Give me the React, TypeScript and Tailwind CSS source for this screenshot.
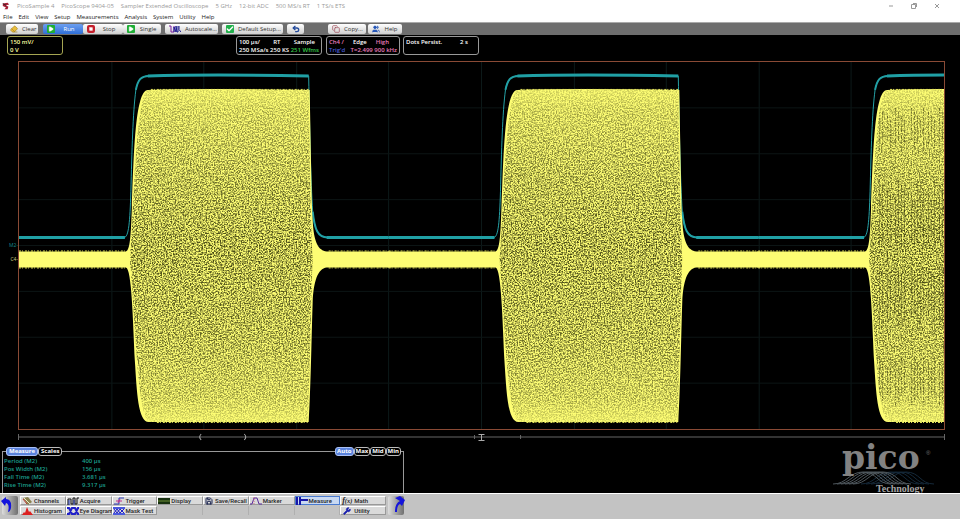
import React from 'react';
import { Check, Copy as CopyIcon, Eraser, Play, Save, Square, Undo2, Users, Wrench } from 'lucide-react';

const menuItems = ['File', 'Edit', 'View', 'Setup', 'Measurements', 'Analysis', 'System', 'Utility', 'Help'];

const titleParts = [
    'PicoSample 4',
    'PicoScope 9404-05',
    'Sampler Extended Oscilloscope',
    '5 GHz',
    '12-bit ADC',
    '500 MS/s RT',
    '1 TS/s ETS'
];

const measurements = [
    { label: 'Period (M2)', value: '400 µs' },
    { label: 'Pos Width (M2)', value: '156 µs' },
    { label: 'Fall Time (M2)', value: '3.681 µs' },
    { label: 'Rise Time (M2)', value: '9.317 µs' }
];

const PulseIcon: React.FC = () => (
    <svg viewBox="0 0 12 9" className="h-[9px] w-3 shrink-0" fill="none">
        <path d="M0 1h2v6h3V1" stroke="#7a1fa0" />
        <path d="M5 7V2l2 5V1l1 6h1V1M10 1Q9 5 12 7" stroke="#1c1c90" />
    </svg>
);

const ChannelsIcon: React.FC = () => (
    <svg viewBox="0 0 12 8" className="h-2 w-3 shrink-0">
        <path d="M2 1L7 0L11 5L7 8Z" fill="#8b8350" />
        <path d="M3 1L9 7" stroke="#f2eccb" />
        <path d="M2 2L6 7" stroke="#b7372b" />
    </svg>
);

const AcquireIcon: React.FC = () => (
    <svg viewBox="0 0 12 8" className="h-2 w-3 shrink-0" fill="none">
        <path d="M1 8V2h3v5h2V1h2v6h2V1h2" stroke="#111" />
        <path d="M2 8V3M7 8V3" stroke="#2437ae" />
    </svg>
);

const TriggerIcon: React.FC = () => (
    <svg viewBox="0 0 12 8" className="h-2 w-3 shrink-0" fill="none">
        <path d="M1 7h5V1h5" stroke="#2f3bb8" />
        <path d="M3 4h6M7 2L5 6" stroke="#c3318c" />
    </svg>
);

const DisplayIcon: React.FC = () => (
    <svg viewBox="0 0 12 8" className="h-2 w-3 shrink-0">
        <rect y="1" width="12" height="6" fill="#17300f" />
        <path d="M0 4h12" stroke="#6d8d37" />
    </svg>
);

const MarkerIcon: React.FC = () => (
    <svg viewBox="0 0 12 8" className="h-2 w-3 shrink-0" fill="none">
        <path d="M0 7h2l2-6h3l2 6h3" stroke="#5a2a9c" />
        <path d="M4 0v8" stroke="#cf6b84" strokeDasharray="1 1" />
    </svg>
);

const MeasureIcon: React.FC = () => (
    <svg viewBox="0 0 12 8" className="h-2 w-3 shrink-0">
        <path d="M1 0v8M4 0v8" stroke="#1717a8" strokeWidth="2" />
        <path d="M4 3h8" stroke="#1717a8" strokeWidth="2" />
    </svg>
);

const HistogramIcon: React.FC = () => (
    <svg viewBox="0 0 12 8" className="h-2 w-3 shrink-0">
        <path d="M1 8L3 5L4 6L6 0L8 5L9 4L12 8Z" fill="#dc2020" />
    </svg>
);

const EyeIcon: React.FC = () => (
    <svg viewBox="0 0 12 8" className="h-2 w-3 shrink-0" fill="none">
        <path d="M0 1h2l3 6h3l3-6h1M0 7h2l3-6h3l3 6h1" stroke="#2020c8" strokeWidth="2" />
    </svg>
);

const MaskIcon: React.FC = () => (
    <svg viewBox="0 0 12 8" className="h-2 w-3 shrink-0" fill="none">
        <path d="M0 1h12M0 7h12" stroke="#4b59dc" strokeWidth="2" />
        <path d="M1 2L4 6L7 2L11 6M1 6L4 2L7 6L11 2" stroke="#2020c8" />
    </svg>
);

const functionButtons = [
    { label: 'Channels', icon: <ChannelsIcon /> },
    { label: 'Acquire', icon: <AcquireIcon /> },
    { label: 'Trigger', icon: <TriggerIcon /> },
    { label: 'Display', icon: <DisplayIcon /> },
    { label: 'Save/Recall', icon: <Save className="h-2 w-[10px] shrink-0 text-[#1b2450]" strokeWidth={3} /> },
    { label: 'Marker', icon: <MarkerIcon /> },
    { label: 'Measure', icon: <MeasureIcon />, active: true },
    { label: 'Math', icon: <i className="w-3 shrink-0 font-['Liberation_Serif',serif] text-[8px] font-bold">f<small>(x)</small></i> },
    { label: 'Histogram', icon: <HistogramIcon /> },
    { label: 'Eye Diagram', icon: <EyeIcon /> },
    { label: 'Mask Test', icon: <MaskIcon /> },
    null,
    null,
    null,
    null,
    { label: 'Utility', icon: <Wrench className="h-2 w-3 shrink-0 fill-[#1c22b0] text-[#1c22b0]" /> }
];

// One modulation burst: upper edge left to right, then the lower edge back
const burst =
    'M-1 190H107C111 189 112 176 113 146C115 96 116 28 129 28Q180 26 291 28C292 80 293 135 294 158C295 182 300 189 308 190H372V206H308C299 207 295 220 294 240C293 270 292 330 290 361H130C119 361 118 330 116 300C114 260 113 207 107 206H-1Z';
const burstBody = 'M111 198C115 160 116 28 130 28H290C291 100 292 160 294 198C292 240 291 330 289 361H132C118 361 117 260 111 198Z';
const envelope = 'M0 176H105C110 176 111 160 112 130C113 90 114 50 117 28C119 18 122 14 130 14Q190 12 290 14C291 70 292 120 294 150C296 168 299 176 309 176H370';
const envelopeCrests = 'M0 176H106M129 14Q190 12 290 14M308 176H370';
const envelopeShoulders = 'M117 28C119 18 122 14 130 14M294 150C296 168 299 176 309 176';

// Sample aliasing shows up as thin columns in the last burst
const aliasColumns = [861, 864, 869, 872, 877, 880, 883, 886, 893, 896, 899, 902, 905, 910, 913, 916, 921, 924];

const Waveform: React.FC = () => {
    const periods = [0, 370, 740];

    return (
        <svg viewBox="0 0 926 368" preserveAspectRatio="none" className="block h-full w-full" role="img" aria-label="Waveform">
            <defs>
                <filter id="speckle" x="0" y="0" width="100%" height="100%" colorInterpolationFilters="sRGB">
                    <feTurbulence type="fractalNoise" baseFrequency="0.71 0.67" numOctaves="3" seed="11" />
                    <feColorMatrix values="0 0 0 0 0.24  0 0 0 0 0.25  0 0 0 0 0.06  3 0 0 0 -1.1" />
                </filter>
                <linearGradient id="fade" x1="0" y1="0" x2="0" y2="1">
                    <stop offset="0.07" stopColor="#333" />
                    <stop offset="0.13" stopColor="#777" />
                    <stop offset="0.3" stopColor="#bbb" />
                    <stop offset="0.5" stopColor="#eee" />
                    <stop offset="0.75" stopColor="#ccc" />
                    <stop offset="0.92" stopColor="#888" />
                    <stop offset="0.98" stopColor="#333" />
                </linearGradient>
                <mask id="density" maskUnits="userSpaceOnUse" x="0" y="0" width="926" height="368">
                    <rect width="926" height="368" fill="url(#fade)" />
                </mask>
                <clipPath id="bodies">
                    {periods.map((x) => (
                        <path key={x} d={burstBody} transform={`translate(${x})`} />
                    ))}
                </clipPath>
            </defs>

            {/* Graticule */}
            <path
                d="M93 0V368M185 0V368M278 0V368M370 0V368M463 0V368M556 0V368M648 0V368M741 0V368M833 0V368"
                stroke="#0c1919"
            />
            <path d="M0 46H926M0 92H926M0 138H926M0 184H926M0 230H926M0 276H926M0 322H926" stroke="#0c1515" />

            {periods.map((x) => (
                <g key={x} transform={`translate(${x})`}>
                    <path d={envelope} fill="none" stroke="#26a3a8" />
                    <path d={envelopeShoulders} fill="none" stroke="#22a0a5" strokeWidth="2" />
                    <path d={envelopeCrests} fill="none" stroke="#20a0a5" strokeWidth="3" />
                    <path d={burst} fill="#fdfd74" />
                    <path d="M0 189.5H106M132 27.5H290M310 189.5H370M0 206.5H106M138 361.5H289M310 206.5H370" stroke="#e6e65c" strokeDasharray="2 1 1 2" />
                </g>
            ))}

            <g clipPath="url(#bodies)" mask="url(#density)">
                <rect width="926" height="368" filter="url(#speckle)" />
            </g>
            <g clipPath="url(#bodies)" stroke="#2c2c08" opacity="0.5">
                {aliasColumns.map((x, i) => (
                    <path
                        key={x}
                        d={`M${x}.5 ${46 + (i % 4) * 4}V${90 - (i % 3) * 6}M${x}.5 ${118 + (i % 5) * 5}V${186 - (i % 3) * 5}M${x}.5 ${206 + (i % 4) * 3}V${268 - (i % 5) * 4}M${x}.5 ${296 + (i % 3) * 5}V${344 - (i % 4) * 4}`}
                        strokeDasharray="3 1 2 1 1 2"
                    />
                ))}
            </g>
        </svg>
    );
};

const ToolButton: React.FC<{ label: string; icon: React.ReactNode; width: string; active?: boolean }> = ({
    label,
    icon,
    width,
    active
}) => (
    <button
        className={`flex h-[10px] items-center gap-1 overflow-hidden rounded-[2px] px-1 whitespace-nowrap ${width} ${
            active ? 'bg-gradient-to-b from-[#6d9ff0] to-[#2f6fd8] text-white' : 'bg-gradient-to-b from-white to-[#cfcfcf] text-[#333]'
        }`}
    >
        {icon}
        <span className="flex-1 text-center">{label}</span>
    </button>
);

const PanelTab: React.FC<{ label: string; active?: boolean; compact?: boolean }> = ({ label, active, compact }) => (
    <button
        className={`h-[9px] rounded-[3px] border leading-[7px] font-bold text-white ${compact ? 'px-px' : 'px-[2px]'} ${
            active ? 'border-[#a9c0f5] bg-[#5b83dc]' : 'border-[#bbb] bg-black'
        }`}
    >
        {label}
    </button>
);

const TitleBar: React.FC = () => (
    <header className="bg-white">
        <div className="flex h-3 items-center justify-between pr-5 pl-[2px]">
            <div className="flex items-center gap-[7px] text-[#999]">
                <svg viewBox="0 0 10 10" className="h-2 w-2">
                    <path d="M1 2L7 1L9 3L5 4L8 6L7 9H3L5 7L1 5Z" fill="#a51f35" />
                    <path d="M1 2L5 4" stroke="#222" />
                </svg>
                {titleParts.map((part) => (
                    <span key={part}>{part}</span>
                ))}
            </div>
            <div className="flex items-center gap-[17px]">
                <button aria-label="Minimize">
                    <svg viewBox="0 0 6 6" className="h-[6px] w-[6px]"><path d="M1 3H5" stroke="#999" /></svg>
                </button>
                <button aria-label="Restore">
                    <svg viewBox="0 0 6 6" className="h-[6px] w-[6px]" fill="none" stroke="#999"><path d="M.5 1.5h4v4h-4zM2 .5h3.5V4" /></svg>
                </button>
                <button aria-label="Close">
                    <svg viewBox="0 0 6 6" className="h-[6px] w-[6px]"><path d="M1 1L5 5M5 1L1 5" stroke="#999" /></svg>
                </button>
            </div>
        </div>
        <nav className="flex h-[10px] items-center gap-[6px] pl-[3px] text-[#222]" aria-label="Main menu">
            {menuItems.map((item) => (
                <button key={item}>{item}</button>
            ))}
        </nav>
    </header>
);

const Toolbar: React.FC = () => (
    <div className="flex h-[13px] items-center border-t border-[#aaa] bg-[#6e6e6e] pl-[6px]">
        <ToolButton label="Clear" width="w-8" icon={<Eraser className="h-2 w-2 shrink-0 fill-[#e8bd3c] text-[#a88420]" />} />
        <div className="ml-[5px] flex">
            <ToolButton label="Run" width="w-10" active icon={<Play className="h-2 w-2 shrink-0 rounded-[1px] bg-[#1fae35] fill-white p-px text-white" />} />
            <ToolButton label="Stop" width="w-10" icon={<Square className="h-2 w-2 shrink-0 rounded-[2px] bg-[#c41f2c] fill-white p-[2px] text-white" />} />
            <ToolButton label="Single" width="w-[38px]" icon={<Play className="h-2 w-2 shrink-0 rounded-[1px] bg-[#1fae35] fill-white p-px text-white" />} />
        </div>
        <div className="ml-1 flex gap-1">
            <ToolButton label="Autoscale..." width="w-[53px]" icon={<PulseIcon />} />
            <ToolButton label="Default Setup..." width="w-[61px]" icon={<Check className="h-2 w-2 shrink-0 rounded-[1px] bg-[#22b14c] text-white" strokeWidth={4} />} />
            <button aria-label="Undo" className="flex h-[10px] w-[17px] items-center justify-center rounded-[2px] bg-gradient-to-b from-white to-[#cfcfcf]">
                <Undo2 className="h-2 w-2 text-[#234a9c]" strokeWidth={4} />
            </button>
        </div>
        <div className="ml-6 flex gap-[2px]">
            <ToolButton label="Copy..." width="w-[38px]" icon={<CopyIcon className="h-2 w-2 shrink-0 text-[#9b4452]" />} />
            <ToolButton label="Help" width="w-[34px]" icon={<Users className="h-2 w-2 shrink-0 fill-[#2456b8] text-[#2456b8]" />} />
        </div>
    </div>
);

const StatusBoxes: React.FC = () => {
    const box = 'h-[19px] rounded-[3px] border px-[2px] pt-px leading-2 font-semibold whitespace-nowrap';

    return (
        <section className="flex px-[7px] pt-px" aria-label="Acquisition status">
            <div className={`${box} w-14 border-[#a5a552] text-[#ffffa0]`}>
                <p>150 mV/</p>
                <p>0 V</p>
            </div>
            <div className={`${box} ml-[173px] w-[86px] border-[#999] text-white`}>
                <p className="flex justify-between pr-1"><span>100 µs/</span><span>RT</span><span>Sample</span></p>
                <p className="flex justify-between"><span>250 MSa/s</span><span>250 KS</span><span className="text-[#35c94a]">251 Wfms</span></p>
            </div>
            <div className={`${box} ml-1 w-[74px] border-[#999] text-[#e77ab8]`}>
                <p className="flex justify-between pr-2"><span>Ch4 /</span><span className="text-white">Edge</span><span>High</span></p>
                <p className="flex justify-between"><span className="text-[#4659d8]">Trig'd</span><span>T=2.499 900 kHz</span></p>
            </div>
            <div className={`${box} ml-[3px] w-[76px] border-[#999] text-white`}>
                <p className="flex justify-between pr-2"><span>Dots Persist.</span><span>2 s</span></p>
            </div>
        </section>
    );
};

const PicoLogo: React.FC = () => (
    <svg viewBox="0 0 104 46" className="h-[46px] w-[104px] overflow-visible" role="img" aria-label="pico Technology">
        <g fill="none" strokeWidth="1">
            {[28, 33, 38, 43].map((x) => (
                <path key={x} d={`M${x} 37C${x + 14} 37 ${x + 16} 25 ${x + 30} 25S${x + 44} 37 ${x + 58} 37`} stroke="#15293a" />
            ))}
            {[0, 4, 8, 12, 16, 20].map((x) => (
                <path key={x} d={`M${x} 37C${x + 14} 37 ${x + 16} 25 ${x + 30} 25S${x + 44} 37 ${x + 58} 37`} stroke="#4f585e" />
            ))}
        </g>
        <text x="9" y="22" fill="#828282" fontFamily="'DejaVu Serif', serif" fontSize="33" fontWeight="bold">pico</text>
        <text x="93" y="8" fill="#777" fontFamily="'Liberation Sans', sans-serif" fontSize="6">®</text>
        <text x="43" y="45" fill="#a5a5a5" fontFamily="'Liberation Serif', serif" fontSize="10" fontWeight="bold">Technology</text>
    </svg>
);

const MeasurePanel: React.FC = () => (
    <section className="ml-[2px] flex w-[402px] flex-col">
        <div className="flex items-center">
            <div className="h-px w-1 bg-[#999]" />
            <PanelTab label="Measure" active />
            <PanelTab label="Scales" />
            <div className="h-px flex-1 bg-[#999]" />
            {['Auto', 'Max', 'Mid', 'Min'].map((tab) => (
                <PanelTab key={tab} label={tab} active={tab === 'Auto'} compact />
            ))}
            <div className="h-px w-[3px] bg-[#999]" />
        </div>
        <div className="-mt-1 flex-1 border-x border-[#999] pt-[5px] pl-px">
            <table className="text-[#1b9f8d]">
                <tbody>
                    {measurements.map((row) => (
                        <tr key={row.label} className="h-2 leading-2">
                            <th scope="row" className="w-[78px] p-0 text-left font-semibold">{row.label}</th>
                            <td className="p-0 font-semibold">{row.value}</td>
                        </tr>
                    ))}
                </tbody>
            </table>
        </div>
    </section>
);

const ScrollButton: React.FC<{ label: string; arrow: string }> = ({ label, arrow }) => (
    <button aria-label={label} className="h-[19px] w-4 rounded-[2px] bg-gradient-to-r from-[#ddd] to-[#707070]">
        <svg viewBox="0 0 16 19" className="block h-full w-full overflow-visible">
            <path d={arrow} fill="#1414dc" />
        </svg>
    </button>
);

const FunctionBar: React.FC = () => (
    <footer className="flex h-[26px] items-start gap-[2px] border-t border-white bg-[#c3c3c3] pt-[2px] pl-[2px]">
        <ScrollButton label="Previous functions" arrow="M-1 5L4 1V3Q10 3 9 12Q8 16 6 16Q8 8 4 7L3 10Z" />
        <div className="grid w-[366px] grid-cols-8 gap-y-px">
            {functionButtons.map((item, index) =>
                item ? (
                    <button
                        key={item.label}
                        className={`flex h-[9px] items-center gap-px border font-['Roboto',sans-serif] font-medium whitespace-nowrap text-[#222] ${
                            item.active ? 'border-[#4a7bd0] bg-[#c9d9f2]' : 'border-t-white border-r-[#999] border-b-[#999] border-l-white bg-[#dadada]'
                        }`}
                    >
                        {item.icon}
                        <span>{item.label}</span>
                    </button>
                ) : (
                    <div key={index} className="border-r border-[#b0b0b0]" />
                )
            )}
        </div>
        <ScrollButton label="Next functions" arrow="M7 2L12 0L17 4L14 10L12 8Q9 9 9 16H7Q7 7 12 5Z" />
    </footer>
);

const App: React.FC = () => {
    return (
        <div className="flex h-screen flex-col bg-black font-['Open_Sans',sans-serif] text-[6px] leading-2">
            <TitleBar />
            <Toolbar />
            <StatusBoxes />

            <main className="mt-[6px] flex min-h-0 flex-1 pr-[15px]">
                <div className="flex w-[18px] flex-col items-end text-[5px]">
                    <span className="mt-auto text-[#168a8c]">M2-</span>
                    <span className="mt-[6px] mb-[167px] text-[#cccc80]">C4-</span>
                </div>
                <div className="min-w-0 flex-1 border border-[#8a4a35]">
                    <Waveform />
                </div>
            </main>

            {/* Time base ruler */}
            <svg viewBox="0 0 926 10" preserveAspectRatio="none" className="mt-[2px] mr-[15px] ml-[18px] h-[10px] w-auto" fill="none" stroke="#666">
                <path d="M0 5H926M.5 2V8M925.5 2V8M456 3V7M502 3V7" />
                <path d="M183 2Q180 5 183 8M226 2Q229 5 226 8M460 2.5H466M463 2V8M460 8.5H466" stroke="#aaa" />
            </svg>

            <div className="mt-[5px] flex h-[46px] justify-between pr-[23px]">
                <MeasurePanel />
                <PicoLogo />
            </div>
            <FunctionBar />
        </div>
    );
};

export default App;
